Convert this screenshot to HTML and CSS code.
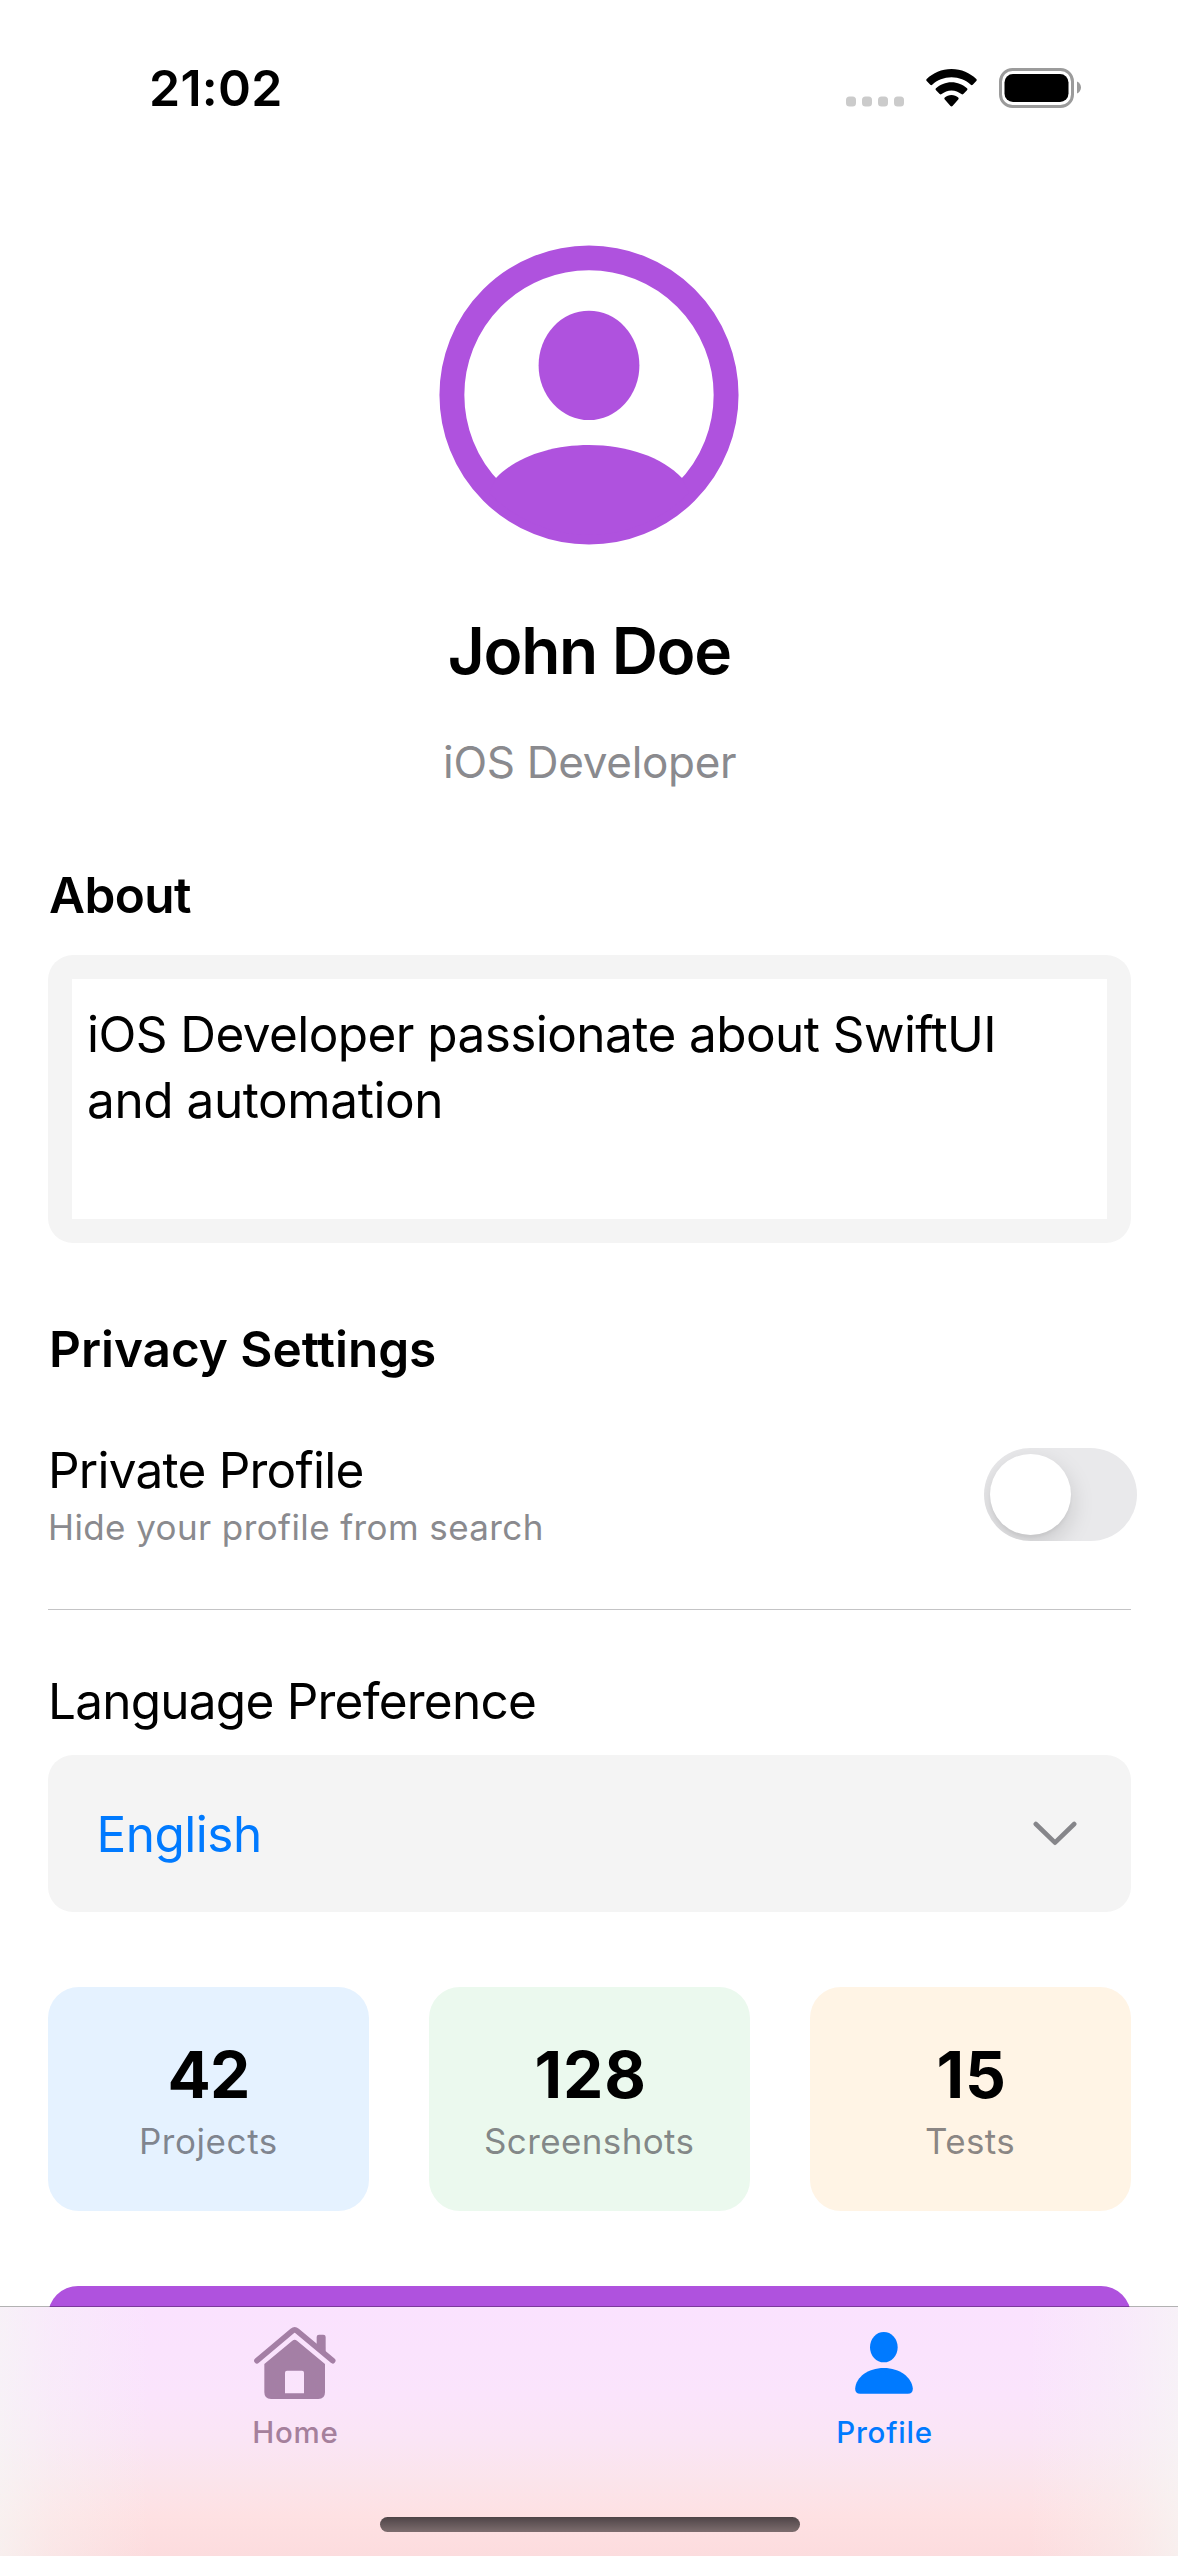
FILE: index.html
```
<!DOCTYPE html>
<html lang="en">
<head>
<meta charset="utf-8">
<title>Profile</title>
<link rel="stylesheet" href="styles.css">
</head>
<body>
<div class="screen">
  <header class="status">
    <span class="time">21:02</span>
    <div class="status-icons">
      <svg class="dots" width="58" height="40" viewBox="0 0 58 40" fill="#cbcbcb">
        <rect x="0" y="28.5" width="10" height="10" rx="3.5"/>
        <rect x="16" y="28.5" width="10" height="10" rx="3.5"/>
        <rect x="32" y="28.5" width="10" height="10" rx="3.5"/>
        <rect x="48" y="28.5" width="10" height="10" rx="3.5"/>
      </svg>
      <svg class="wifi" width="51" height="40" viewBox="0 0 51 40">
        <path d="M25.5 1C35.5 1 44 5 50.3 11c.6.6.6 1.4 0 2l-3.6 3.7c-.6.6-1.3.6-1.9 0C39.8 12 33 9.2 25.5 9.2S11.2 12 6.2 16.7c-.6.6-1.3.6-1.9 0L.7 13c-.6-.6-.6-1.4 0-2C7 5 15.5 1 25.5 1Z"/>
        <path d="M25.5 14.2c6 0 11.4 2.3 15.5 6.1.6.6.6 1.4 0 2L37.3 26c-.5.5-1.3.6-1.9.1-2.7-2.3-6.1-3.7-9.9-3.7s-7.2 1.4-9.9 3.7c-.6.5-1.4.4-1.9-.1L10 22.3c-.6-.6-.6-1.4 0-2 4.1-3.8 9.5-6.1 15.5-6.1Z"/>
        <path d="M25.5 27c2.6 0 5 .9 6.7 2.5.6.5.6 1.3 0 1.9l-5.7 6.7c-.6.6-1.4.6-2 0l-5.7-6.7c-.6-.6-.6-1.4 0-1.9 1.7-1.6 4.1-2.5 6.7-2.5Z"/>
      </svg>
      <svg class="battery" width="83" height="40" viewBox="0 0 83 40">
        <rect x="1.5" y="1.5" width="72" height="37" rx="12" fill="none" stroke="#9b9b9b" stroke-width="3"/>
        <rect x="5.5" y="6" width="64" height="28" rx="8.5"/>
        <path d="M78 13.5c2.6 1.1 4 3.5 4 6s-1.4 5-4 6Z" fill="#9b9b9b"/>
      </svg>
    </div>
  </header>

  <main class="content">
    <section class="hero">
      <svg class="avatar" width="300" height="300" viewBox="-150 -150 300 300">
        <circle r="137.1" fill="none" stroke="#af52de" stroke-width="24.9"/>
        <ellipse cx="0" cy="-29.6" rx="50.4" ry="54.7" fill="#af52de"/>
        <path d="M-93 83C-73 62-38 50 0 50S73 62 93 83L100 98A140 140 0 0 1-100 98Z" fill="#af52de"/>
      </svg>
      <h1 class="name">John Doe</h1>
      <p class="role">iOS Developer</p>
    </section>

    <section class="about">
      <h2 class="heading about-heading">About</h2>
      <div class="editor"><p class="editor-text"><span class="line-one">iOS Developer passionate about SwiftUI</span><br>and automation</p></div>
    </section>

    <section class="privacy">
      <h2 class="heading">Privacy Settings</h2>
      <div class="setting">
        <div class="setting-text">
          <span class="label">Private Profile</span>
          <span class="hint">Hide your profile from search</span>
        </div>
        <div class="toggle"><div class="knob"></div></div>
      </div>
    </section>

    <section class="language">
      <span class="label">Language Preference</span>
      <div class="select">
        <span class="select-value">English</span>
        <svg width="44" height="26" viewBox="0 0 44 26" fill="none" stroke="#86868a" stroke-width="4.6" stroke-linecap="round" stroke-linejoin="round">
          <path d="M2.8 3 22 21.7 41.2 3"/>
        </svg>
      </div>
    </section>

    <section class="stats">
      <div class="stat blue"><span class="value tight">42</span><span class="caption projects">Projects</span></div>
      <div class="stat green"><span class="value">128</span><span class="caption">Screenshots</span></div>
      <div class="stat orange"><span class="value">15</span><span class="caption">Tests</span></div>
    </section>

    <div class="action"></div>
  </main>

  <nav class="tabs">
    <a class="tab">
      <svg width="82" height="74" viewBox="102 78 246 222" fill="#a47fa5">
        <path d="M111 182 217 92.5Q224 86.5 231 92.5L338 182" fill="none" stroke="#a47fa5" stroke-width="17" stroke-linecap="round"/>
        <path d="M290 140V111Q290 104 297 104H310Q317 104 317 111V164Z"/>
        <path fill-rule="evenodd" d="M217 122Q224 117 231 122L315 192V277Q315 297 295 297H153Q133 297 133 277V192ZM201 212Q195 212 195 218V280H252V218Q252 212 246 212Z"/>
      </svg>
      <span class="tab-label">Home</span>
    </a>
    <a class="tab active">
      <svg width="58" height="74" viewBox="164.5 79 174 222" fill="#007aff">
        <ellipse cx="251" cy="142.5" rx="41.5" ry="45.5"/>
        <path d="M180 282Q165 282 165 267C167 233 203 205 251 205S335 233 338 267Q338 282 323 282Z"/>
      </svg>
      <span class="tab-label">Profile</span>
    </a>
    <div class="home-indicator"></div>
  </nav>
</div>
</body>
</html>
```
FILE: styles.css
```
* { box-sizing: border-box; }

body {
  margin: 0;
  background: #fff;
  color: #000;
  font-family: Inter, "Liberation Sans", sans-serif;
}

h1, h2, p { margin: 0; }
svg { display: block; flex: none; }

.screen {
  position: relative;
  width: 1178px;
  height: 2556px;
  overflow: hidden;
}

/* Status bar */
.status {
  display: flex;
  align-items: center;
  justify-content: space-between;
  height: 175px;
  padding: 0 96px 0 149px;
}
.time { font-size: 50px; font-weight: 600; letter-spacing: .25px; line-height: 66px; }
.status-icons { display: flex; align-items: center; gap: 22px; }

/* Page content */
.content { padding: 70px 47.5px 0 48px; }

.hero { display: flex; flex-direction: column; align-items: center; }
.name { margin-top: 66px; font-size: 64px; font-weight: 600; letter-spacing: -1.35px; line-height: 80px; }
.role { margin-top: 43px; padding-left: 1px; font-size: 44px; letter-spacing: -.3px; line-height: 56px; color: #8a8a8e; }

.heading { padding-left: 1px; font-size: 49.5px; font-weight: 600; letter-spacing: -.04px; line-height: 66px; }
.about { margin-top: 72px; }
.about-heading { letter-spacing: -.6px; }
.editor {
  height: 288px;
  margin-top: 27px;
  padding: 24px;
  border-radius: 25px;
  background: #f4f4f4;
}
.editor-text {
  height: 240px;
  padding: 22px 15px;
  background: #fff;
  font-size: 49.5px;
  letter-spacing: -.42px;
  line-height: 66px;
  white-space: nowrap;
}
.line-one { letter-spacing: -.57px; }

.privacy { margin-top: 73px; border-bottom: 1px solid #c4c4c6; }
.setting {
  display: flex;
  align-items: center;
  justify-content: space-between;
  margin: 55px -6.5px 60px 0;
}
.setting-text { display: flex; flex-direction: column; gap: 2px; }
.label { display: block; font-size: 49.5px; letter-spacing: -.77px; line-height: 66px; }
.hint { font-size: 35px; letter-spacing: .4px; line-height: 44px; color: #8a8a8e; }
.toggle {
  width: 153px;
  height: 93px;
  margin-top: 3px;
  padding: 6px;
  border-radius: 47px;
  background: #e9e9eb;
  overflow: hidden;
}
.knob {
  width: 81px;
  height: 81px;
  border-radius: 50%;
  background: #fff;
  box-shadow: 0 9px 24px rgba(0, 0, 0, .15), 0 3px 3px rgba(0, 0, 0, .04);
}

.language { margin-top: 58px; }
.select {
  display: flex;
  align-items: center;
  justify-content: space-between;
  height: 157px;
  margin-top: 21px;
  padding: 0 53.5px 0 48.5px;
  border-radius: 25px;
  background: #f4f4f4;
}
.select-value { font-size: 49.5px; letter-spacing: -.5px; line-height: 66px; color: #007aff; }

.stats {
  display: grid;
  grid-template-columns: repeat(3, 1fr);
  gap: 60px;
  margin-top: 75px;
}
.stat {
  display: flex;
  flex-direction: column;
  align-items: center;
  gap: 5px;
  height: 224px;
  padding-top: 48px;
  border-radius: 31px;
}
.blue { background: #e5f2ff; }
.green { background: #ebf9ee; }
.orange { background: #fff4e5; }
.value { padding-left: 3px; font-size: 64px; font-weight: 700; letter-spacing: .9px; line-height: 80px; }
.value.tight { padding-left: 0; letter-spacing: -.8px; }
.caption { font-size: 35px; letter-spacing: .38px; line-height: 42px; color: rgba(60, 60, 67, .6); }
.projects { letter-spacing: .57px; }

.action {
  height: 150px;
  margin-top: 75px;
  border-radius: 30px;
  background: #af52de;
}

.tabs {
  position: absolute;
  left: 0;
  right: 0;
  bottom: 0;
  display: grid;
  grid-template-columns: 1fr 1fr;
  height: 250px;
  padding-top: 19px;
  border-top: 1px solid rgba(0, 0, 0, .3);
  background:
    linear-gradient(90deg, rgba(246, 247, 245, .7) 0, rgba(246, 247, 245, .38) 50px, rgba(246, 247, 245, 0) 150px, rgba(246, 247, 245, 0) 1028px, rgba(246, 247, 245, .38) 1128px, rgba(246, 247, 245, .7) 1178px),
    linear-gradient(180deg, #fae2fe 0, #fae4fc 35%, #fae5f5 54%, #fbe4eb 70%, #fee1e3 84%, #fcdcde 100%);
  background-clip: padding-box;
}
.tab { display: flex; flex-direction: column; align-items: center; gap: 14px; }
.tab-label { padding-left: 2px; font-size: 29.5px; font-weight: 500; letter-spacing: .8px; line-height: 36px; color: #a5809c; }
.active .tab-label { color: #007aff; }
.home-indicator {
  position: absolute;
  left: 380px;
  bottom: 24px;
  width: 420px;
  height: 15px;
  border-radius: 8px;
  background: linear-gradient(#4e4447, #7d6d6e);
}
```
